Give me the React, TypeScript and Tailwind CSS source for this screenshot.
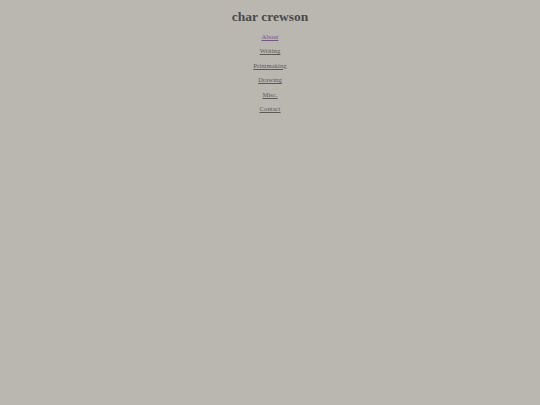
const LINKS = ["About", "Writing", "Printmaking", "Drawing", "Misc.", "Contact"];

export default function App() {
  return (
    <div className="min-h-[405px] w-full bg-[#bab7b1] font-['Liberation_Serif',serif]">
      <header className="flex justify-center pt-[9px]">
        <h1 className="text-[13.5px] font-bold leading-[16px] text-[#4a4a4a]">char crewson</h1>
      </header>
      <nav className="mt-[7px] flex flex-col items-center gap-[5.4px]">
        {LINKS.map((label, i) => (
          <a
            key={label}
            href="#"
            className={
              i === 0
                ? "text-[6.75px] leading-[9px] text-[#7b4e9e] underline"
                : "text-[6.75px] leading-[9px] text-[#5a5a5a] underline"
            }
          >
            {label}
          </a>
        ))}
      </nav>
    </div>
  );
}
